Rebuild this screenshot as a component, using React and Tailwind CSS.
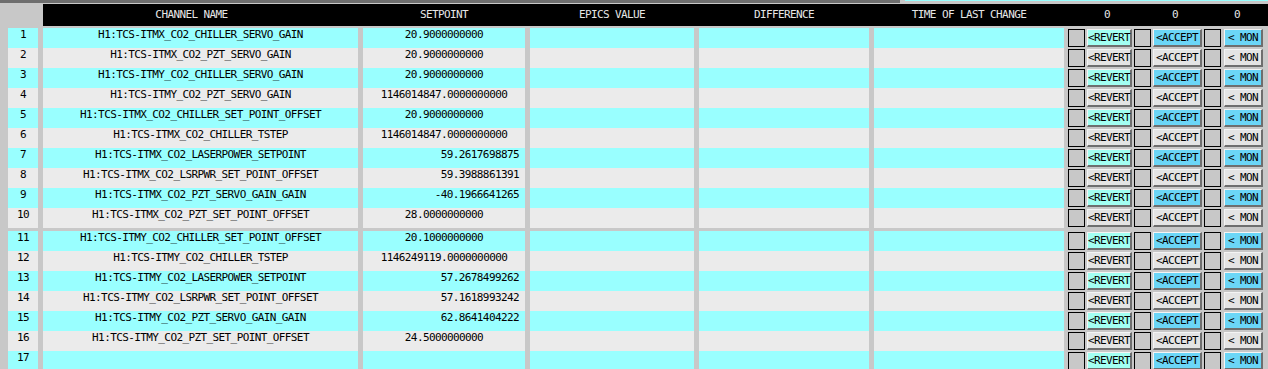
import React from 'react';

const rows = [
  [1, 'H1:TCS-ITMX_CO2_CHILLER_SERVO_GAIN', '20.9000000000'],
  [2, 'H1:TCS-ITMX_CO2_PZT_SERVO_GAIN', '20.9000000000'],
  [3, 'H1:TCS-ITMY_CO2_CHILLER_SERVO_GAIN', '20.9000000000'],
  [4, 'H1:TCS-ITMY_CO2_PZT_SERVO_GAIN', '1146014847.0000000000'],
  [5, 'H1:TCS-ITMX_CO2_CHILLER_SET_POINT_OFFSET', '20.9000000000'],
  [6, 'H1:TCS-ITMX_CO2_CHILLER_TSTEP', '1146014847.0000000000'],
  [7, 'H1:TCS-ITMX_CO2_LASERPOWER_SETPOINT', '59.2617698875', true],
  [8, 'H1:TCS-ITMX_CO2_LSRPWR_SET_POINT_OFFSET', '59.3988861391', true],
  [9, 'H1:TCS-ITMX_CO2_PZT_SERVO_GAIN_GAIN', '-40.1966641265', true],
  [10, 'H1:TCS-ITMX_CO2_PZT_SET_POINT_OFFSET', '28.0000000000'],
  [11, 'H1:TCS-ITMY_CO2_CHILLER_SET_POINT_OFFSET', '20.1000000000'],
  [12, 'H1:TCS-ITMY_CO2_CHILLER_TSTEP', '1146249119.0000000000'],
  [13, 'H1:TCS-ITMY_CO2_LASERPOWER_SETPOINT', '57.2678499262', true],
  [14, 'H1:TCS-ITMY_CO2_LSRPWR_SET_POINT_OFFSET', '57.1618993242', true],
  [15, 'H1:TCS-ITMY_CO2_PZT_SERVO_GAIN_GAIN', '62.8641404222', true],
  [16, 'H1:TCS-ITMY_CO2_PZT_SET_POINT_OFFSET', '24.5000000000'],
  [17, '', ''],
];

const bevel =
  'h-[18px] mt-[1px] flex items-center justify-center border-t border-l border-t-[#f4f4f4] border-l-[#f4f4f4] border-b-2 border-r-2 border-b-[#6e6e6e] border-r-[#6e6e6e] leading-none';

function Box() {
  return <div className="w-[17px] h-[18px] mt-[1px] bg-[#c8c8c8] border border-black" />;
}

function Row({ num, name, value, shifted }) {
  const cyan = num % 2 === 1;
  const cell = cyan ? 'bg-[#99ffff]' : 'bg-[#ebebeb]';
  const revert = cyan ? 'bg-[#a2fff2]' : 'bg-[#e4e4e4]';
  const blue = cyan ? 'bg-[#6bd6f7]' : 'bg-[#e4e4e4]';

  return (
    <div className="flex h-[20px]">
      <div className={`ml-[8px] w-[30px] ${cell} text-center pt-[1px]`}>{num}</div>
      <div className={`ml-[5px] w-[315px] ${cell} text-center pt-[1px]`}>{name}</div>
      <div
        className={`ml-[5px] w-[162px] ${cell} pt-[1px] ${
          shifted ? 'text-right pr-[6px]' : 'text-center'
        }`}
      >
        {value}
      </div>
      <div className={`ml-[5px] w-[164px] ${cell}`} />
      <div className={`ml-[5px] w-[170px] ${cell}`} />
      <div className={`ml-[5px] w-[190px] ${cell}`} />
      <div className="ml-[4px]">
        <Box />
      </div>
      <div className={`ml-[2px] w-[45px] ${bevel} ${revert}`}>&lt;REVERT</div>
      <div className="ml-[2px]">
        <Box />
      </div>
      <div className={`ml-[2px] w-[49px] ${bevel} ${blue}`}>&lt;ACCEPT</div>
      <div className="ml-[2px]">
        <Box />
      </div>
      <div className={`ml-[3px] w-[39px] ${bevel} ${blue}`}>&lt; MON</div>
    </div>
  );
}

export default function App() {
  return (
    <div className="w-[1268px] h-[369px] overflow-hidden bg-[#c8c8c8] text-black text-[11px] leading-[12px] tracking-[-0.6px] font-['DejaVu_Sans_Mono','Liberation_Mono',monospace]">
      {/* top strip */}
      <div className="flex h-[3px]">
        <div className="w-[900px] bg-[#6e6e6e]" />
        <div className="ml-[5px] flex-1 border-t border-[#99ffff]" />
      </div>

      {/* header */}
      <div className="flex h-[22px] mt-[1px]">
        <div className="ml-[43px] flex-1 bg-black flex items-center text-[#e6e6e6]">
          <div className="w-[315px] text-center pr-[18px]">CHANNEL NAME</div>
          <div className="ml-[5px] w-[162px] text-center">SETPOINT</div>
          <div className="ml-[5px] w-[164px] text-center">EPICS VALUE</div>
          <div className="ml-[5px] w-[170px] text-center">DIFFERENCE</div>
          <div className="ml-[5px] w-[190px] text-center">TIME OF LAST CHANGE</div>
          <div className="ml-[40px]">0</div>
          <div className="ml-[62px]">0</div>
          <div className="ml-[56px]">0</div>
        </div>
      </div>

      {/* rows */}
      <div className="mt-[2px]">
        {rows.slice(0, 10).map(([n, name, v, s]) => (
          <Row key={n} num={n} name={name} value={v} shifted={s} />
        ))}
      </div>
      <div className="mt-[3px]">
        {rows.slice(10).map(([n, name, v, s]) => (
          <Row key={n} num={n} name={name} value={v} shifted={s} />
        ))}
      </div>
    </div>
  );
}
